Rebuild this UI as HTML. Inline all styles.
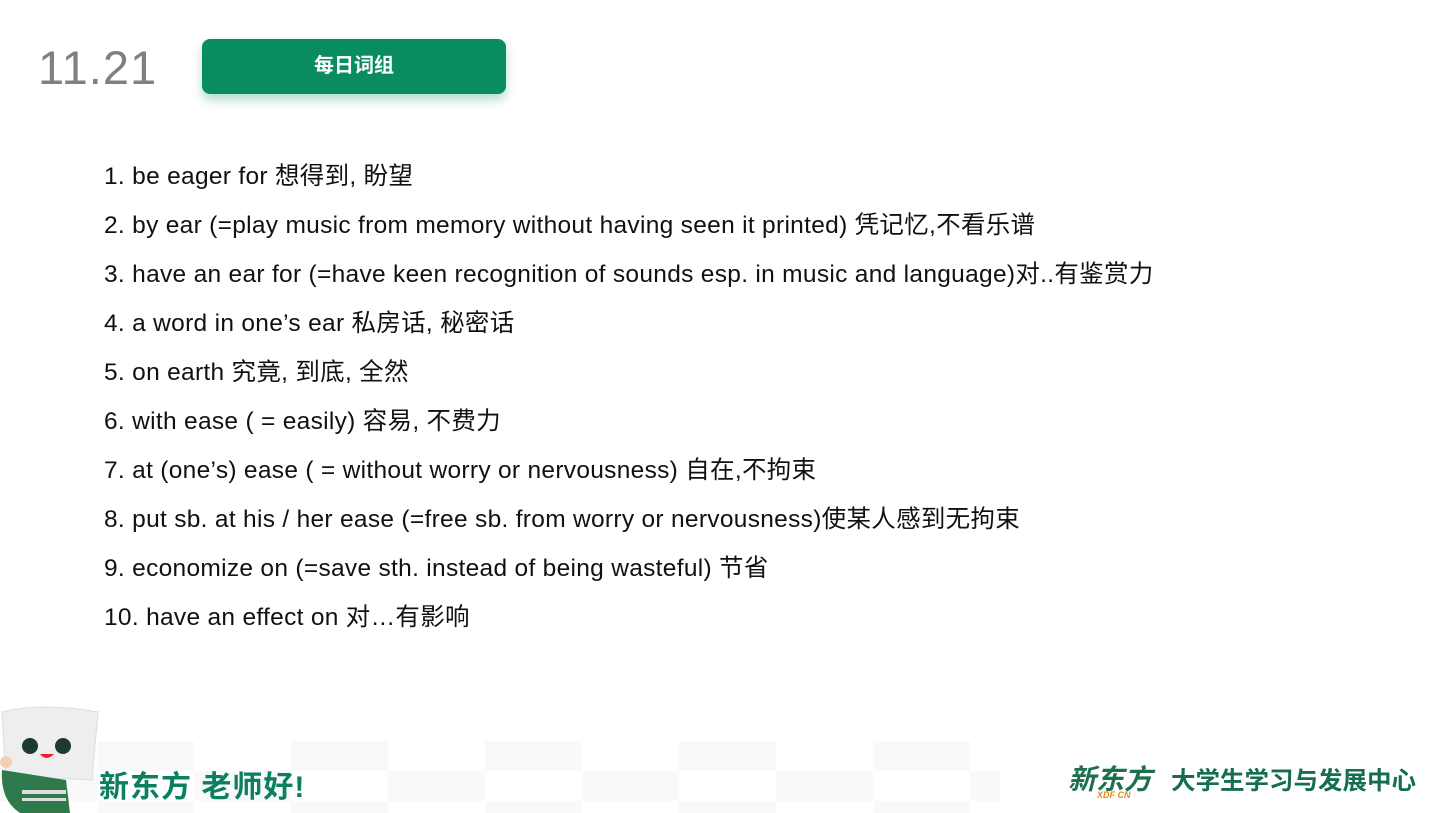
<!DOCTYPE html>
<html><head><meta charset="utf-8"><style>
body{margin:0;width:1450px;height:813px;background:#fff;position:relative;overflow:hidden;font-family:"Liberation Sans","Noto Sans CJK SC",sans-serif}
.date{position:absolute;left:38px;top:40px;font-size:47px;color:#808080;letter-spacing:1px;line-height:56px}
.btn{position:absolute;left:202px;top:39px;width:304px;height:55px;background:#0a8c62;border-radius:8px;box-shadow:0 6px 10px rgba(10,140,98,.3);color:#fff;font-weight:bold;font-size:20px;text-align:center;line-height:55px}
.list{position:absolute;left:104px;top:159px;font-size:24.5px;color:#111;letter-spacing:0.3px}
.list div{height:49px;line-height:36px;white-space:nowrap}
.band{position:absolute;left:0;top:741px;width:1000px;height:72px;background:
 repeating-conic-gradient(#f9f9f9 0 25%,#fff 0 50%) 0 0/194px 60px}
.t1{position:absolute;left:99px;top:762px;font-size:30px;font-weight:bold;color:#0a8060;letter-spacing:1px}
.logo{position:absolute;left:1068px;top:758px;font-size:28px;font-weight:bold;font-style:italic;color:#1d6f4f}
.xdf{position:absolute;left:1097px;top:790px;font-size:9px;font-weight:bold;color:#e08a1a;font-style:italic}
.t2{position:absolute;left:1171px;top:762px;font-size:24.5px;font-weight:bold;color:#146f50}
</style></head><body>
<div class="date">11.21</div>
<div class="btn">每日词组</div>
<div class="list">
<div>1. be eager for 想得到, 盼望</div>
<div>2. by ear (=play music from memory without having seen it printed) 凭记忆,不看乐谱</div>
<div>3. have an ear for (=have keen recognition of sounds esp. in music and language)对..有鉴赏力</div>
<div>4. a word in one’s ear 私房话, 秘密话</div>
<div>5. on earth 究竟, 到底, 全然</div>
<div>6. with ease ( = easily) 容易, 不费力</div>
<div>7. at (one’s) ease ( = without worry or nervousness) 自在,不拘束</div>
<div>8. put sb. at his / her ease (=free sb. from worry or nervousness)使某人感到无拘束</div>
<div>9. economize on (=save sth. instead of being wasteful) 节省</div>
<div>10. have an effect on 对…有影响</div>
</div>
<div class="band"></div>
<svg style="position:absolute;left:0;top:700px" width="100" height="113">
<path d="M2 12 Q40 2 98 12 L92 80 Q50 76 6 84 Z" fill="#eeeeee" stroke="#ddd"/>
<circle cx="30" cy="46" r="8" fill="#1d3b2c"/><circle cx="63" cy="46" r="8" fill="#1d3b2c"/>
<path d="M40 54 Q46 62 54 54 Z" fill="#e22"/>
<path d="M2 70 Q0 100 20 113 L70 113 L66 80 Z" fill="#2e7a4c"/>
<rect x="22" y="90" width="44" height="4" fill="#ddd"/><rect x="22" y="98" width="44" height="3" fill="#ddd"/>
<circle cx="6" cy="62" r="6" fill="#f1d0b5"/>
</svg>
<div class="t1">新东方 老师好!</div>
<div class="logo">新东方</div>
<div class="xdf">XDF CN</div>
<div class="t2">大学生学习与发展中心</div>
</body></html>
